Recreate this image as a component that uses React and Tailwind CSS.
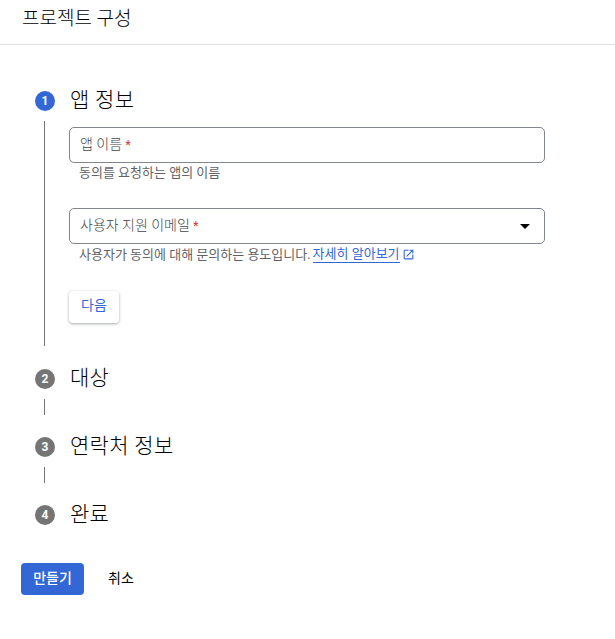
const font = "font-['Roboto','Noto_Sans_CJK_KR',sans-serif]";

function StepHead({ n, title, active }) {
  return (
    <div className="flex items-center h-[20px]">
      <div
        className={`w-[20px] h-[20px] rounded-full flex items-center justify-center text-white text-[12px] font-bold ${
          active ? "bg-[#3367d6]" : "bg-[#757575]"
        }`}
      >
        {n}
      </div>
      <span className="ml-[15px] pb-[2px] text-[21px] tracking-[0.3px] leading-[20px] font-light text-[#000000]">{title}</span>
    </div>
  );
}

function Connector({ tall }) {
  return (
    <div className={`w-[20px] pl-[9px] pt-[10px] ${tall ? "pb-[23px]" : "pb-[22px]"}`}>
      <div className={`w-px bg-[#757575] ${tall ? "h-[225px]" : "h-[16px]"}`} />
    </div>
  );
}

function Field({ label, select }) {
  return (
    <div className="w-[476px] h-[36px] border border-[#80868b] rounded-[5px] flex items-center justify-between pl-[10px] pr-[14px]">
      <span className="pb-[2px] text-[14px] font-light text-[#444746]">
        {label} <span className="text-[12px] font-normal text-[#d93025]">*</span>
      </span>
      {select && (
        <div className="w-0 h-0 border-l-[5px] border-r-[5px] border-t-[5px] border-l-transparent border-r-transparent border-t-black" />
      )}
    </div>
  );
}

export default function App() {
  return (
    <div className={`w-[615px] h-[639px] bg-white overflow-hidden ${font}`}>
      <div className="h-[45px] border-b border-[#e0e0e0] pl-[22px] flex items-start">
        <h1 className="text-[19px] leading-[38px] font-light text-[#000000]">프로젝트 구성</h1>
      </div>

      <div className="pl-[35px] pt-[46px]">
        <StepHead n="1" title="앱 정보" active />
        <div className="flex">
          <Connector tall />
          <div className="ml-[14px] pt-[16px]">
            <Field label="앱 이름" />
            <p className="mt-[2px] pl-[10px] text-[13px] leading-[16px] text-[#5f6368]">
              동의를 요청하는 앱의 이름
            </p>
            <div className="mt-[27px]">
              <Field label="사용자 지원 이메일" select />
            </div>
            <p className="mt-[2px] pl-[10px] text-[13px] leading-[16px] text-[#5f6368] flex items-center">
              사용자가 동의에 대해 문의하는 용도입니다.
              <a className="ml-[2px] text-[#3367d6] border-b border-[#3367d6]">자세히 알아보기</a>
              <svg className="ml-[2px] w-[13px] h-[13px] text-[#3367d6]" viewBox="0 0 24 24" fill="currentColor">
                <path d="M19 19H5V5h7V3H5c-1.11 0-2 .9-2 2v14c0 1.1.89 2 2 2h14c1.1 0 2-.9 2-2v-7h-2v7zM14 3v2h3.59l-9.83 9.83 1.41 1.41L19 6.41V10h2V3h-7z" />
              </svg>
            </p>
            <button className="mt-[28px] w-[50px] h-[32px] pb-[3px] rounded-[4px] bg-white text-[#3367d6] text-[14px] shadow-[0_1px_3px_rgba(60,64,67,0.45)]">
              다음
            </button>
          </div>
        </div>
        <StepHead n="2" title="대상" />
        <Connector />
        <StepHead n="3" title="연락처 정보" />
        <Connector />
        <StepHead n="4" title="완료" />
      </div>

      <div className="pl-[21px] pt-[38px] flex items-center">
        <button className="w-[63px] h-[32px] pb-[2px] rounded-[4px] bg-[#3367d6] text-white text-[14px] font-medium">
          만들기
        </button>
        <button className="ml-[24px] pb-[2px] text-[14px] text-[#000000]">취소</button>
      </div>
    </div>
  );
}
